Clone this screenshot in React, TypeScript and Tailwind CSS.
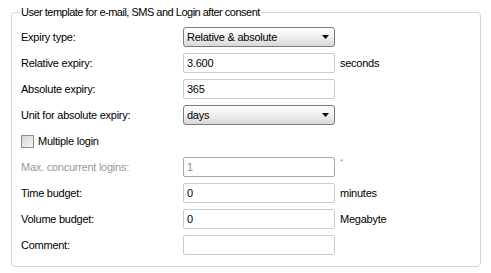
import React from "react";

const font = { fontFamily: '"Liberation Sans", Arial, sans-serif' };

function Select(props: { value: string }) {
    return (
        <div className="relative flex items-center w-[152px] h-[20px] px-[3px] rounded-[3px] border border-[#7b7b7b] bg-gradient-to-b from-[#ffffff] via-[#f0f0f0] to-[#d8d8d8] text-black">
            <span>{props.value}</span>
            <svg className="absolute right-[5px] top-[7px]" width="7" height="4" viewBox="0 0 7 4">
                <path d="M0 0 H7 L3.5 4 Z" fill="#000" />
            </svg>
        </div>
    );
}

function Input(props: { value: string; disabled?: boolean }) {
    return (
        <div className={"flex items-center w-[152px] h-[20px] px-[3px] rounded-[2px] border bg-white " + (props.disabled ? "border-[#a9a9a9] text-[#8c8c8c]" : "border-[#c8cdd3] text-black")}>
            {props.value}
        </div>
    );
}

function Row(props: { label: string; children: any; unit?: string; disabled?: boolean; star?: boolean }) {
    return (
        <div className="flex items-center h-[20px]">
            <div className={"w-[162px] " + (props.disabled ? "text-[#9a9a9a]" : "text-black")}>{props.label}</div>
            {props.children}
            {props.unit && <div className="ml-[5px] text-black">{props.unit}</div>}
            {props.star && <div className="ml-[5px] self-start -mt-[2px] text-[8px] text-[#a0a0a0]">*</div>}
        </div>
    );
}

export default function App() {
    return (
        <div className="w-[491px] h-[273px] bg-white text-[11px] tracking-[-0.25px] leading-[13px]" style={font}>
            <fieldset className="ml-[11px] mt-[6px] w-[470px] border border-[#d0d7e2] rounded-[4px] pl-[9px] pt-[8px] pb-[11px]">
                <legend className="px-[1px] -ml-[1px] leading-[13px] tracking-[-0.5px] text-black">User template for e-mail, SMS and Login after consent</legend>
                <div className="flex flex-col gap-[6px]">
                    <Row label="Expiry type:"><Select value="Relative & absolute" /></Row>
                    <Row label="Relative expiry:" unit="seconds"><Input value="3.600" /></Row>
                    <Row label="Absolute expiry:"><Input value="365" /></Row>
                    <Row label="Unit for absolute expiry:"><Select value="days" /></Row>
                    <div className="flex items-center h-[20px]">
                        <div className="w-[13px] h-[13px] border border-[#8e8f8f] bg-gradient-to-br from-[#d6d6d6] to-[#f6f6f6]"></div>
                        <span className="ml-[4px] text-black">Multiple login</span>
                    </div>
                    <Row label="Max. concurrent logins:" disabled star><Input value="1" disabled /></Row>
                    <Row label="Time budget:" unit="minutes"><Input value="0" /></Row>
                    <Row label="Volume budget:" unit="Megabyte"><Input value="0" /></Row>
                    <Row label="Comment:"><Input value="" /></Row>
                </div>
            </fieldset>
        </div>
    );
}
